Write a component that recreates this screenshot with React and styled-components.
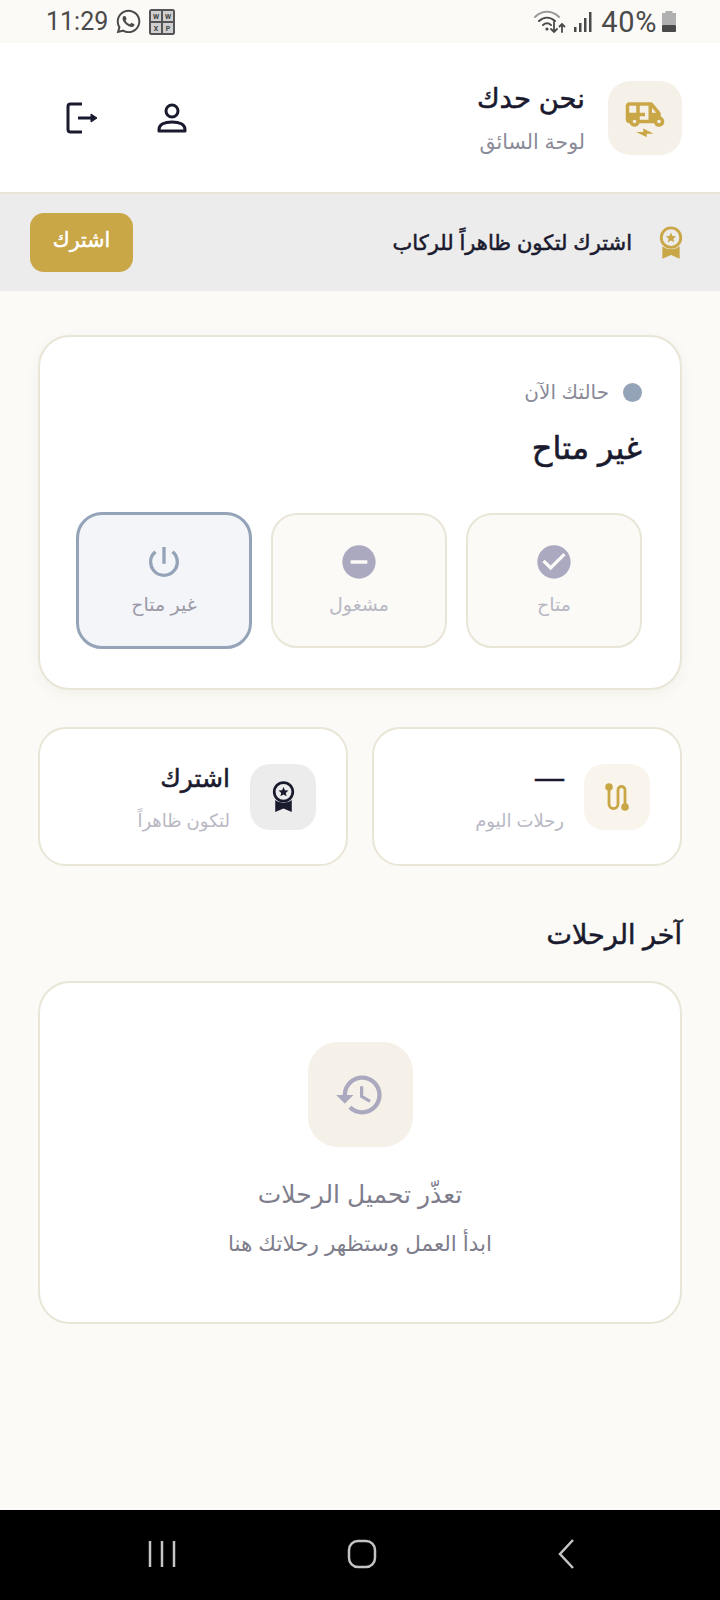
import React from "react";
import styled, { createGlobalStyle, css } from "styled-components";
import { FaWhatsapp } from "react-icons/fa";
import {
  MdHistory,
  MdCheckCircle,
  MdDoDisturbOn,
  MdPowerSettingsNew,
  MdElectricRickshaw,
} from "react-icons/md";

const ARABIC = `"Liberation Sans", "DejaVu Sans", "Noto Sans", sans-serif`;

// the bold cut of the Arabic fallback runs too wide, so thicken the regular one
const heavy = css`
  font-weight: 400;
  -webkit-text-stroke: 0.55px currentColor;
`;

const GlobalStyle = createGlobalStyle`
  html, body { margin: 0; padding: 0; background: #fbfaf6; }
  * { box-sizing: border-box; }
  body { font-family: ${ARABIC}; }
`;

const Screen = styled.div`
  width: 720px;
  height: 1600px;
  display: flex;
  flex-direction: column;
  overflow: hidden;
  background: #fbfaf6;
`;

const StatusBar = styled.div`
  direction: ltr;
  height: 43px;
  flex: none;
  padding: 0 43px 0 46px;
  display: flex;
  align-items: center;
  justify-content: space-between;
  color: #4a4a4a;
  font-family: Roboto, sans-serif;
  font-size: 25px;
`;

const StatusGroup = styled.div`
  display: flex;
  align-items: center;
  gap: ${p => p.$gap}px;
`;

const Percent = styled.span`
  margin: 0 -2px 0 2px;
  font-size: 29px;
  letter-spacing: 0.6px;
`;

const Header = styled.header`
  direction: rtl;
  height: 151px;
  flex: none;
  background: #fff;
  border-bottom: 2px solid #e9e6d8;
  padding: 0 38px 0 65px;
  display: flex;
  align-items: center;
  gap: 23px;
`;

const IconBox = styled.div`
  width: ${p => p.$size}px;
  height: ${p => p.$size}px;
  flex: none;
  border-radius: ${p => p.$radius}px;
  background: ${p => p.$bg};
  color: ${p => p.$color};
  display: flex;
  align-items: center;
  justify-content: center;
`;

const TitleStack = styled.div`
  display: flex;
  flex-direction: column;
  gap: 9px;
  padding-top: 3px;
`;

const AppName = styled.div`
  ${heavy}
  font-size: 27.5px;
  color: #1a1a2e;
  line-height: 36px;
`;

const AppSub = styled.div`
  font-size: 20.5px;
  color: #8a8a98;
  line-height: 32px;
`;

const Actions = styled.div`
  margin-right: auto;
  display: flex;
  gap: 56px;
  color: #1a1a2e;
`;

const IconButton = styled.div`
  width: 34px;
  height: 34px;
  display: flex;
  align-items: center;
  justify-content: center;
`;

const Banner = styled.div`
  direction: rtl;
  height: 97px;
  flex: none;
  background: #ececec;
  padding: 0 36px 0 30px;
  display: flex;
  align-items: center;
  gap: 26px;
  color: #c9a646;
`;

const BannerText = styled.div`
  ${heavy}
  font-size: 21px;
  color: #1a1a2e;
`;

const SubscribeButton = styled.button`
  ${heavy}
  margin-right: auto;
  width: 103px;
  height: 59px;
  border: none;
  border-radius: 14px;
  background: #c9a646;
  color: #fff;
  font-family: inherit;
  font-size: 20.5px;
  padding: 0 0 5px;
`;

const Main = styled.main`
  direction: rtl;
  flex: 1;
  padding: 44px 38px 0 38px;
  display: flex;
  flex-direction: column;
`;

const Card = styled.section`
  background: #fff;
  border: 2px solid #e9e6d8;
  border-radius: 32px;
`;

const StatusCard = styled(Card)`
  height: 355px;
  padding: 39px 38px 0;
  box-shadow: 0 4px 14px rgba(60, 50, 20, 0.05);
`;

const NowRow = styled.div`
  display: flex;
  align-items: center;
  gap: 14px;
  height: 32px;
  font-size: 20px;
  color: #8a8a98;
`;

const Dot = styled.span`
  width: 19px;
  height: 19px;
  border-radius: 50%;
  background: #94a3b8;
`;

const NowValue = styled.div`
  ${heavy}
  margin-top: 18px;
  font-size: 32px;
  color: #1a1a2e;
  line-height: 44px;
`;

const Options = styled.div`
  margin-top: 43px;
  display: grid;
  grid-template-columns: repeat(3, 176px);
  gap: 19px;
`;

const Option = styled.div`
  height: ${p => (p.$active ? 137 : 135)}px;
  border-radius: 26px;
  border: ${p => (p.$active ? "3px solid #94a3b8" : "2px solid #e9e6d8")};
  background: ${p => (p.$active ? "#f3f5f8" : "#fbfaf6")};
  color: ${p => (p.$active ? "#94a3b8" : "#aba9c0")};
  margin-top: ${p => (p.$active ? -1 : 0)}px;
  display: flex;
  flex-direction: column;
  align-items: center;
  justify-content: center;
  gap: 8px;
`;

const OptionLabel = styled.div`
  font-size: 19px;
  line-height: 30px;
  color: ${p => (p.$active ? "#9a9aa8" : "#b8b8c4")};
`;

const Stats = styled.div`
  margin-top: 37px;
  display: grid;
  grid-template-columns: 1fr 1fr;
  gap: 24px;
`;

const StatCard = styled(Card)`
  height: 139px;
  border-radius: 28px;
  padding: 0 30px;
  display: flex;
  align-items: center;
  gap: 20px;
`;

const StatValue = styled.div`
  ${heavy}
  font-size: ${p => (p.$dash ? 29 : 25)}px;
  color: #1a1a2e;
  line-height: 36px;
`;

const StatLabel = styled.div`
  margin-top: 11px;
  font-size: 18px;
  color: #b8b8c4;
  line-height: 26px;
  padding-top: 1px;
`;

const SectionTitle = styled.h2`
  ${heavy}
  margin: 51px 0 28px;
  font-size: 27px;
  color: #1a1a2e;
  line-height: 36px;
`;

const EmptyCard = styled(Card)`
  height: 343px;
  padding-top: 59px;
  display: flex;
  flex-direction: column;
  align-items: center;
`;

const EmptyTitle = styled.div`
  margin-top: 29px;
  font-size: 25px;
  color: #7d7d8c;
  line-height: 36px;
`;

const EmptyText = styled.div`
  margin-top: 17px;
  font-size: 21.5px;
  color: #7d7d8c;
  line-height: 30px;
`;

const NavBar = styled.nav`
  height: 90px;
  flex: none;
  background: #000;
  display: grid;
  grid-template-columns: 200px 210px 18px;
  padding: 29px 0 0 147px;
  color: #c4c4c4;
`;

const WifiIcon = () => (
  <svg width="34" height="30" viewBox="0 0 34 30" fill="none" stroke="currentColor" strokeLinecap="round">
    <path d="M2 10C9 3 19 3 26 10" strokeWidth="2" stroke="#9a9a9a" />
    <path d="M6 14c5-4.500 11-4.500 16 0" strokeWidth="2" />
    <path d="M10 18c3-2.500 5-2.500 8 0" strokeWidth="2" />
    <circle cx="14" cy="22" r="1.600" fill="currentColor" stroke="none" />
    <path d="M21 15v10m-3-3 3 3 3-3M29 25V17m-2.500 2.500L29 17l2.500 2.500" strokeWidth="1.800" />
  </svg>
);

const SignalIcon = () => (
  <svg width="20" height="24" viewBox="0 0 20 24" fill="currentColor">
    <rect x="1" y="17" width="2.500" height="5" />
    <rect x="6" y="13" width="2.500" height="9" />
    <rect x="11" y="8" width="2.500" height="14" />
    <rect x="16" y="2" width="2.500" height="20" />
  </svg>
);

const BatteryIcon = () => (
  <svg width="16" height="24" viewBox="0 0 16 24">
    <rect x="4.500" y="1" width="7" height="3" fill="#b0b0b0" />
    <rect x="1" y="3" width="14" height="12" fill="#b0b0b0" />
    <rect x="1" y="15" width="14" height="7" rx="1" fill="#4a4a4a" />
  </svg>
);

const KeypadIcon = () => (
  <svg width="26" height="26" viewBox="0 0 26 26" fontFamily="Roboto, sans-serif" fontSize="7" fontWeight="700" textAnchor="middle" fill="#444">
    <rect width="26" height="26" rx="2.500" fill="#555" />
    <rect x="2" y="2" width="10" height="10" fill="#cfcfcf" />
    <rect x="14" y="2" width="10" height="10" fill="#cfcfcf" />
    <rect x="2" y="14" width="10" height="10" fill="#cfcfcf" />
    <rect x="14" y="14" width="10" height="10" fill="#cfcfcf" />
    <text x="7" y="9.500">W</text>
    <text x="19" y="9.500">W</text>
    <text x="7" y="21.500">X</text>
    <text x="19" y="21.500">P</text>
  </svg>
);

const PersonIcon = () => (
  <svg width="30" height="30" viewBox="0 0 30 30" fill="none" stroke="currentColor" strokeWidth="3" strokeLinejoin="round">
    <circle cx="15" cy="8" r="6" />
    <path d="M2 28v-1.500c0-5 5.500-7.500 13-7.500s13 2.500 13 7.500V28z" />
  </svg>
);

const LogoutIcon = () => (
  <svg width="32" height="32" viewBox="0 0 32 32" fill="none" stroke="currentColor" strokeWidth="3">
    <path d="M16 2H4.500Q2 2 2 4.500v23Q2 30 4.500 30H16" />
    <path d="M12 16h17" />
    <path d="M25 12l6 4-6 4z" fill="currentColor" strokeWidth="1" />
  </svg>
);

const MedalIcon = ({ width, height }) => (
  <svg width={width} height={height} viewBox="0 0 24 30" fill="currentColor">
    <circle cx="12" cy="10.500" r="9" fill="none" stroke="currentColor" strokeWidth="2.600" />
    <path d="M12 5.800l1.400 3.200 3.400.3-2.600 2.200.8 3.300-3-1.700-3 1.700.8-3.300-2.600-2.200 3.400-.3z" />
    <path d="M4 18.500c4.500 3.600 11.500 3.600 16 0V30l-8-3.500L4 30z" />
  </svg>
);

const RouteIcon = () => (
  <svg width="28" height="32" viewBox="0 0 28 32" fill="none" stroke="currentColor" strokeWidth="2.800" strokeLinecap="round">
    <circle cx="6" cy="6" r="3.800" fill="currentColor" stroke="none" />
    <circle cx="22" cy="26" r="3.800" fill="currentColor" stroke="none" />
    <path d="M6 6v17a4.500 4.500 0 0 0 9 0V9a3.500 3.500 0 0 1 7 0v17" />
  </svg>
);

const RecentsIcon = () => (
  <svg width="30" height="30" viewBox="0 0 30 30" stroke="currentColor" strokeWidth="2.500">
    <path d="M3 2v26M15 2v26M27 2v26" />
  </svg>
);

const HomeIcon = () => (
  <svg width="30" height="30" viewBox="0 0 30 30" fill="none" stroke="currentColor" strokeWidth="2.500">
    <rect x="2" y="2" width="26" height="26" rx="9" />
  </svg>
);

const BackIcon = () => (
  <svg width="18" height="30" viewBox="0 0 18 30" fill="none" stroke="currentColor" strokeWidth="2.500">
    <path d="M16 1 3 15l13 14" />
  </svg>
);

const options = [
  { label: "متاح", Icon: MdCheckCircle },
  { label: "مشغول", Icon: MdDoDisturbOn },
  { label: "غير متاح", Icon: MdPowerSettingsNew, active: true },
];

const App = () => (
  <>
    <GlobalStyle />
    <Screen>
      <StatusBar>
        <StatusGroup $gap={7}>
          <span>11:29</span>
          <FaWhatsapp size={27} />
          <KeypadIcon />
        </StatusGroup>
        <StatusGroup $gap={6}>
          <WifiIcon />
          <SignalIcon />
          <Percent>40%</Percent>
          <BatteryIcon />
        </StatusGroup>
      </StatusBar>

      <Header>
        <IconBox $size={74} $radius={22} $bg="#f5f1e8" $color="#c9a646">
          <MdElectricRickshaw size={42} />
        </IconBox>
        <TitleStack>
          <AppName>نحن حدك</AppName>
          <AppSub>لوحة السائق</AppSub>
        </TitleStack>
        <Actions>
          <IconButton>
            <PersonIcon />
          </IconButton>
          <IconButton>
            <LogoutIcon />
          </IconButton>
        </Actions>
      </Header>

      <Banner>
        <MedalIcon width={26} height={33} />
        <BannerText>اشترك لتكون ظاهراً للركاب</BannerText>
        <SubscribeButton>اشترك</SubscribeButton>
      </Banner>

      <Main>
        <StatusCard>
          <NowRow>
            <Dot />
            <span>حالتك الآن</span>
          </NowRow>
          <NowValue>غير متاح</NowValue>
          <Options>
            {options.map(({ label, Icon, active }) => (
              <Option key={label} $active={active}>
                <Icon size={40} />
                <OptionLabel $active={active}>{label}</OptionLabel>
              </Option>
            ))}
          </Options>
        </StatusCard>

        <Stats>
          <StatCard>
            <IconBox $size={66} $radius={20} $bg="#f9f5ec" $color="#c9a646">
              <RouteIcon />
            </IconBox>
            <div>
              <StatValue $dash>—</StatValue>
              <StatLabel>رحلات اليوم</StatLabel>
            </div>
          </StatCard>
          <StatCard>
            <IconBox $size={66} $radius={20} $bg="#ececec" $color="#1a1a2e">
              <MedalIcon width={25} height={31} />
            </IconBox>
            <div>
              <StatValue>اشترك</StatValue>
              <StatLabel>لتكون ظاهراً</StatLabel>
            </div>
          </StatCard>
        </Stats>

        <SectionTitle>آخر الرحلات</SectionTitle>

        <EmptyCard>
          <IconBox $size={105} $radius={30} $bg="#f5f1e8" $color="#aba9c0">
            <MdHistory size={52} />
          </IconBox>
          <EmptyTitle>تعذّر تحميل الرحلات</EmptyTitle>
          <EmptyText>ابدأ العمل وستظهر رحلاتك هنا</EmptyText>
        </EmptyCard>
      </Main>

      <NavBar>
        <RecentsIcon />
        <HomeIcon />
        <BackIcon />
      </NavBar>
    </Screen>
  </>
);

export default App;
